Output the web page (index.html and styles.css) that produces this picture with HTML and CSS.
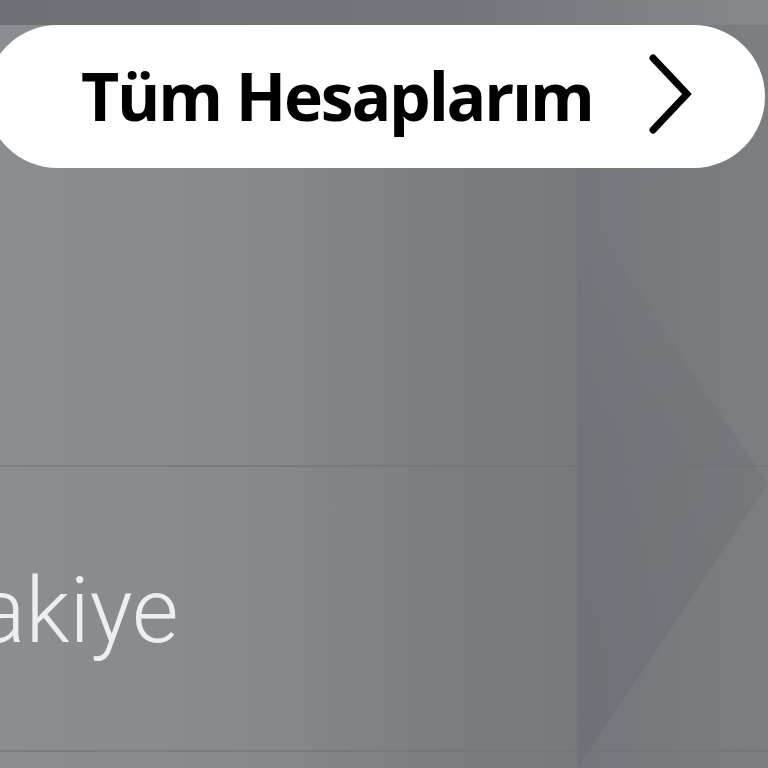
FILE: index.html
```html
<!DOCTYPE html>
<html lang="tr">
<head>
<meta charset="utf-8">
<title>Tüm Hesaplarım</title>
<link rel="stylesheet" href="styles.css">
</head>
<body>
<div class="screen">
  <div class="shade" aria-hidden="true"></div>
  <div class="top-band"></div>
  <a class="pill" href="#">
    <span class="pill-label">Tüm Hesaplarım</span>
    <svg class="chevron" width="48" height="84" viewBox="0 0 48 84" aria-hidden="true">
      <polyline points="6,6 40,42 6,78" fill="none" stroke="#000" stroke-width="7" stroke-linecap="round" stroke-linejoin="miter"/>
    </svg>
  </a>
  <div class="balance-row">
    <span class="balance-label">Bakiye</span>
  </div>
</div>
</body>
</html>
```

FILE: styles.css
```css
* { box-sizing: border-box; }
html, body {
  margin: 0;
  padding: 0;
  width: 768px;
  height: 768px;
  overflow: hidden;
}
body {
  font-family: "Open Sans", "Liberation Sans", sans-serif;
}
.screen {
  position: relative;
  width: 768px;
  height: 768px;
  display: flex;
  flex-direction: column;
  background: linear-gradient(to right,
    #8a8e91 0%,
    #878b8e 30%,
    #7e8285 50%,
    #787c7f 62%,
    #777b7e 74.8%,
    #73777b 75.2%,
    #777b7e 88%,
    #7b7f82 100%);
  overflow: hidden;
}
.shade {
  position: absolute;
  left: 578px;
  top: 200px;
  width: 190px;
  height: 568px;
  background: linear-gradient(to bottom, rgba(104,108,112,0) 0%, rgba(104,108,112,0.3) 40%, rgba(104,108,112,0.45) 100%);
  clip-path: polygon(0 0, 100% 50%, 0 100%);
}
.top-band {
  height: 25px;
  flex: none;
  background: linear-gradient(to right, #6d7175 0%, #72767a 60%, #85898c 100%);
}
.pill {
  position: relative;
  flex: none;
  margin-left: -14px;
  width: 779px;
  height: 143px;
  border-radius: 72px;
  background: #fff;
  display: flex;
  align-items: center;
  padding-left: 95px;
  text-decoration: none;
  color: #000;
}
.pill-label {
  font-family: "Open Sans", "Liberation Sans", sans-serif;
  font-weight: 700;
  font-size: 66px;
  letter-spacing: -2.2px;
  line-height: 1;
  position: relative;
  top: -2px;
}
.chevron {
  margin-left: auto;
  margin-right: 70px;
  position: relative;
  top: -3px;
}
.balance-row {
  position: relative;
  flex: none;
  margin-top: 297px;
  height: 287px;
  border-top: 2px solid rgba(110,114,118,0.55);
  border-bottom: 2px solid rgba(110,114,118,0.55);
  display: flex;
  align-items: flex-start;
}
.balance-label {
  font-family: Roboto, "Open Sans", sans-serif;
  font-weight: 300;
  font-size: 90px;
  line-height: 1;
  color: #eceef0;
  margin-left: -78px;
  margin-top: 100px;
}
```
